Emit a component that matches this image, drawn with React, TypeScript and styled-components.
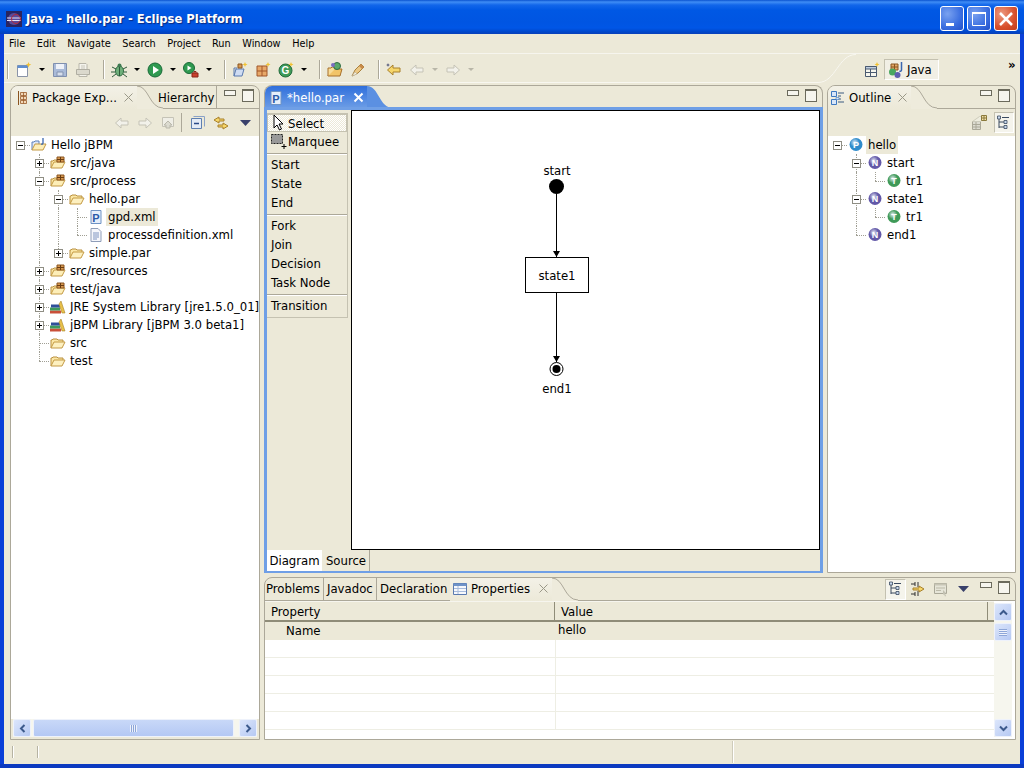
import React from 'react';
import styled, { createGlobalStyle } from 'styled-components';

const GlobalStyle = createGlobalStyle`
  html, body {
    margin: 0;
    padding: 0;
    overflow: hidden;
    background: #ece9d8;
  }
  * {
    box-sizing: border-box;
  }
`;

const UI_FONT = `'DejaVu Sans Condensed', 'DejaVu Sans', 'Liberation Sans', sans-serif`;

/* ---------- icons ---------- */

const Ico = styled.svg.attrs({ viewBox: '0 0 16 16' })`
  width: 16px;
  height: 16px;
  flex-shrink: 0;
  display: block;
`;

const FolderIcon = () => (
  <Ico>
    <path d="M1 13V5h1l1-1h4l1 1h5v2" fill="#fbe7a6" stroke="#b98f3c" />
    <path d="M1 13l3-6h11l-3 6z" fill="#fdf0c0" stroke="#c49a44" />
  </Ico>
);

const PackageFolderIcon = () => (
  <Ico>
    <path d="M1 13V6h2l1-1h3v2" fill="#fbe7a6" stroke="#b98f3c" />
    <path d="M1 13l3-6h11l-3 6z" fill="#fdeeb8" stroke="#c49a44" />
    <path d="M7 2h7v5H7z" fill="#d99a50" stroke="#8a5420" />
    <path d="M10.500 2v5M7 4.500h7" stroke="#6b3d12" />
  </Ico>
);

const ProjectIcon = () => (
  <Ico>
    <path d="M1 13V5h2l1-1h4v3" fill="#dfe8f8" stroke="#5b7fb8" />
    <path d="M1 13l3-6h11l-3 6z" fill="#fdeeb8" stroke="#c49a44" />
    <path d="M12 1v5c0 1-1 1.500-2 1" fill="none" stroke="#3a66b0" strokeWidth="1.300" />
  </Ico>
);

const LibraryIcon = () => (
  <Ico>
    <path d="M0 11.500h11v3H0z" fill="#c9503a" />
    <path d="M0 8.500h10v3H0z" fill="#3d9a5c" />
    <path d="M1 5.500h9v3H1z" fill="#2f4f9a" />
    <path d="M11 2l4 12h-3L9 5z" fill="#e8c04a" stroke="#a8842a" strokeWidth=".6" />
  </Ico>
);

const ParFileIcon = () => (
  <Ico>
    <path d="M3 1.500h10v13H3z" fill="#e6eefa" stroke="#6f93c4" />
    <text x="8" y="12.500" textAnchor="middle" fontSize="11" fontWeight="700" fontFamily="Liberation Sans" fill="#2a5aa8">P</text>
  </Ico>
);

const XmlFileIcon = () => (
  <Ico>
    <path d="M3 1.500h7l3 3v10H3z" fill="#f6f7fb" stroke="#8f9db8" />
    <path d="M5 6h6M5 8h6M5 10h6M5 12h4" stroke="#7f94c0" />
  </Ico>
);

const Badge = ({ letter, color }: { letter: string; color: string }) => (
  <Ico>
    <defs>
      <radialGradient id={`b${letter}`} cx=".4" cy=".35" r=".7">
        <stop offset="0" stopColor="#e6ecf6" />
        <stop offset=".5" stopColor={color} />
        <stop offset="1" stopColor={color} />
      </radialGradient>
    </defs>
    <circle cx="8" cy="7.500" r="6.500" fill={`url(#b${letter})`} />
    <text x="8" y="11" textAnchor="middle" fontSize="9" fontWeight="700" fontFamily="Liberation Sans" fill="#fff">{letter}</text>
  </Ico>
);

const NewIcon = () => (
  <Ico>
    <path d="M1.500 3.500h10v11h-10z" fill="#fff" stroke="#8a94a8" />
    <path d="M1.500 3.500h10v2.500h-10z" fill="#5f8fd0" />
    <path d="M12.500 0l.8 2 2 .6-2 .8-.8 2-.8-2-2-.8 2-.6z" fill="#f2c230" />
  </Ico>
);

const SaveIcon = () => (
  <Ico>
    <path d="M1.500 1.500h13v13h-13z" fill="#a9bad8" stroke="#7f8fae" />
    <path d="M4 2h8v5H4z" fill="#eef1f8" />
    <path d="M5 10h6v4H5z" fill="#d6deec" stroke="#8393b0" />
  </Ico>
);

const PrintIcon = () => (
  <Ico>
    <path d="M4 1.500h7l1 1v5H4z" fill="#f4f3ec" stroke="#b8b6aa" />
    <path d="M1.500 7.500h13v5h-13z" fill="#dbd9cd" stroke="#b0aea2" />
    <path d="M4 12.500h8v2H4z" fill="#f4f3ec" stroke="#b8b6aa" />
    <path d="M6 4h4M6 6h4" stroke="#c8c6ba" />
  </Ico>
);

const BugIcon = () => (
  <Ico>
    <ellipse cx="8.500" cy="9" rx="4" ry="5" fill="#6fb07a" stroke="#2f6a42" />
    <circle cx="8.500" cy="3.500" r="2" fill="#3f7a52" />
    <path d="M1 5l4 2M16 5l-4 2M0 10h4M16 10h-3M1 15l4-3M16 15l-4-3M8.500 5v9" stroke="#2f5a3a" />
  </Ico>
);

const RunIcon = () => (
  <Ico>
    <circle cx="8" cy="8" r="7" fill="#2f9a50" stroke="#1a6a38" />
    <path d="M6 4l6 4-6 4z" fill="#fff" />
  </Ico>
);

const ExternalIcon = () => (
  <Ico>
    <circle cx="6" cy="6" r="5.500" fill="#2f9a50" stroke="#1a6a38" />
    <path d="M4.500 3.500l4 2.500-4 2.500z" fill="#fff" />
    <path d="M9 11h6v4H9z" fill="#c8402e" stroke="#8a2418" />
    <path d="M11 11V9.500h2V11" fill="none" stroke="#8a2418" />
  </Ico>
);

const NewPackageIcon = () => (
  <Ico>
    <path d="M2 14l2-7h8l-2 7z" fill="#cfdcf2" stroke="#5a7ab0" />
    <path d="M2 14V6h3" fill="none" stroke="#5a7ab0" />
    <path d="M6 2h4v4H6z" fill="#d99a50" stroke="#8a5420" />
    <path d="M13 0l.7 1.800 1.800.7-1.800.7-.7 1.800-.7-1.800-1.800-.7 1.800-.7z" fill="#f2c230" />
  </Ico>
);

const NewClassIcon = () => (
  <Ico>
    <path d="M2 4h10v10H2z" fill="#e8a868" stroke="#a0562a" />
    <path d="M7 4v10M2 9h10" stroke="#a0562a" />
    <path d="M13 0l.7 1.800 1.800.7-1.800.7-.7 1.800-.7-1.800-1.800-.7 1.800-.7z" fill="#f2c230" />
  </Ico>
);

const NewGIcon = () => (
  <Ico>
    <circle cx="7.500" cy="8.500" r="6.500" fill="#3f9a58" stroke="#1f6a3a" />
    <text x="7.500" y="12" textAnchor="middle" fontSize="10" fontWeight="700" fontFamily="Liberation Sans" fill="#fff">G</text>
    <path d="M13 0l.7 1.800 1.800.7-1.800.7-.7 1.800-.7-1.800-1.800-.7 1.800-.7z" fill="#f2c230" />
  </Ico>
);

const OpenTypeIcon = () => (
  <Ico>
    <path d="M1 14l2-7h12l-2 7z" fill="#f2c468" stroke="#a8702a" />
    <path d="M1 14V6h3l1-1h5" fill="#f8dc98" stroke="#a8702a" />
    <circle cx="10" cy="4" r="3.500" fill="#5aa86a" stroke="#2f6a42" />
    <circle cx="6" cy="3" r="2" fill="#7a6cc0" />
  </Ico>
);

const MarkerIcon = () => (
  <Ico>
    <path d="M2 14l3-6 6-6 3 3-6 6z" fill="#ecc884" stroke="#a8803e" />
    <path d="M9 4l3 3 2-2-3-3z" fill="#c88a4a" />
    <path d="M2 14l3-4 2 2z" fill="#f6f2e2" stroke="#b0a890" strokeWidth=".5" />
  </Ico>
);

const ArrowIcon = ({ dir = 'left', ghost = false, star = false }: { dir?: 'left' | 'right'; ghost?: boolean; star?: boolean }) => (
  <Ico>
    <g transform={dir === 'right' ? 'matrix(-1 0 0 1 16 0)' : undefined}>
      <path
        d="M1.500 8L7 3v3h7v4H7v3z"
        fill={ghost ? '#f2f1ea' : '#f6d66a'}
        stroke={ghost ? '#c5c3b6' : '#a8802a'}
      />
    </g>
    {star && <path d="M2 1l.5 1.500L4 3l-1.500.5L2 5l-.5-1.500L0 3l1.500-.5z" fill="#39406a" />}
  </Ico>
);

const DropDownIcon = ({ color = '#000', large = false }: { color?: string; large?: boolean }) => (
  <svg width={large ? 11 : 6} height={large ? 6 : 3} viewBox="0 0 7 4" preserveAspectRatio="none">
    <path d="M0 0h7L3.500 4z" fill={color} />
  </svg>
);

const SyncIcon = () => (
  <Ico>
    <path d="M1 5l5-3v2h5v2H6v2z" fill="#f6d66a" stroke="#a8802a" />
    <path d="M15 11l-5-3v2H5v2h5v2z" fill="#f6d66a" stroke="#a8802a" />
  </Ico>
);

const CollapseIcon = () => (
  <Ico>
    <path d="M1.500 3.500h10v10h-10z" fill="#e4ebf6" stroke="#5f7fb0" />
    <path d="M4 8.500h5" stroke="#2a4a88" strokeWidth="1.300" />
    <path d="M3.500 1.500h11v10" fill="none" stroke="#8aa2c8" />
  </Ico>
);

const HomeGhostIcon = () => (
  <Ico>
    <path d="M2.500 2.500h11v9h-11z" fill="#efeee6" stroke="#c5c3b6" />
    <path d="M8 6l4 4-2 0v3H6v-3H4z" fill="#dcdbd0" stroke="#bab8ab" />
  </Ico>
);

const PackageTabIcon = () => (
  <Ico>
    <path d="M5.500 1v14" stroke="#8a5420" />
    <path d="M7.500 2.500h6v3h-6zM7.500 6.500h6v3h-6zM7.500 10.500h6v3h-6z" fill="#f2d8b8" stroke="#9a5c28" strokeWidth=".8" />
    <path d="M10.500 2.500v11" stroke="#9a5c28" strokeWidth=".8" />
  </Ico>
);

const OutlineIcon = () => (
  <Ico>
    <path d="M1.500 1.500h5v5h-5zM1.500 9.500h5v5h-5z" fill="#d8e6f8" stroke="#3d78c0" />
    <path d="M8 3h6M8 6h3M8 9h3M8 12h6" stroke="#3a5a80" />
    <path d="M6 7.500h3v2H6z" fill="#d8e6f8" stroke="#3d78c0" strokeWidth=".6" />
  </Ico>
);

const PropsIcon = () => (
  <Ico>
    <path d="M1.500 2.500h13v11h-13z" fill="#f6f8fc" stroke="#5a7ab0" />
    <path d="M1.500 2.500h13v2.500h-13z" fill="#6f93c8" />
    <path d="M2 7.500h12M2 10.500h12M6 5v8" stroke="#a8bcdc" />
  </Ico>
);

const HierarchyIcon = () => (
  <Ico>
    <path d="M3 2v11M3 7h5M3 12h5" stroke="#3a4a60" fill="none" />
    <path d="M1.500 1h3v3h-3zM8 5.500h3v3H8zM8 10.500h3v3H8z" fill="#c8d8ec" stroke="#3a4a60" strokeWidth=".8" />
    <path d="M6 2.500h7" stroke="#3a4a60" />
  </Ico>
);

const FlatLayoutIcon = () => (
  <Ico>
    <path d="M1.500 6.500h8v8h-8z" fill="#dcdbd0" stroke="#aaa898" />
    <path d="M1.500 9.500h8M1.500 12h8M5 6.500v8" stroke="#aaa898" />
    <path d="M1.500 6.500l7-5 6 0-5 5" fill="#eeeddf" stroke="#cfcdbc" />
    <path d="M10.500 .5h5v5h-5z" fill="#f2dfa8" stroke="#8a7a3c" />
    <path d="M13 .5v5M10.500 3h5" stroke="#8a7a3c" />
  </Ico>
);

const PinNextIcon = () => (
  <Ico>
    <path d="M5 1v4M1 3h4M5 11v4M1 13h4M8 1v5M8 10v5" stroke="#333" />
    <path d="M3 7h6V5l5 3-5 3V9H3z" fill="#f6d66a" stroke="#a8802a" />
  </Ico>
);

const FilterGhostIcon = () => (
  <Ico>
    <path d="M1.500 2.500h12v10h-12z" fill="#e6e5d8" stroke="#aaa898" />
    <path d="M1.500 2.500h12v2h-12z" fill="#c8c6b6" />
    <path d="M3 7h9M3 9.500h5" stroke="#bcbaa9" />
    <path d="M10 9l3 3-1 .5 1 2.500-1 .5-1-2.500-1 1z" fill="#c2c0b1" />
  </Ico>
);

const PerspectiveOpenIcon = () => (
  <Ico>
    <path d="M1.500 4.500h11v10h-11z" fill="#f6f6ee" stroke="#4a5a70" />
    <path d="M1.500 4.500h11v2.500h-11z" fill="#bfcde0" stroke="#4a5a70" />
    <path d="M6.500 7v7.500M1.500 10.500h11" stroke="#4a5a70" />
    <path d="M13 0l.7 1.800 1.800.7-1.800.7-.7 1.800-.7-1.800-1.800-.7 1.800-.7z" fill="#f2c230" />
  </Ico>
);

const JavaPerspectiveIcon = () => (
  <Ico>
    <path d="M3 2h7v6H3z" fill="#e2a868" stroke="#8a5420" />
    <path d="M6.500 2v6M3 5h7" stroke="#8a5420" />
    <circle cx="4.500" cy="10" r="3.500" fill="#4aa860" />
    <circle cx="9.500" cy="13" r="3" fill="#5f5fb0" />
    <path d="M13.500 0v8c0 1-1 1.500-2 1" fill="none" stroke="#3a66b0" strokeWidth="1.500" />
  </Ico>
);

const Chevron = ({ dir }: { dir: 'up' | 'down' | 'left' | 'right' }) => {
  const rotation = { up: 0, right: 90, down: 180, left: 270 }[dir];
  return (
    <svg width="9" height="9" viewBox="0 0 9 9">
      <path
        d="M1 6.500L4.500 3 8 6.500"
        fill="none"
        stroke="#3c5a8c"
        strokeWidth="2"
        transform={`rotate(${rotation} 4.500 4.500)`}
      />
    </svg>
  );
};

const CursorIcon = () => (
  <Ico>
    <path d="M3 0v13l3-3 2.500 5 2-1-2.500-5h4z" fill="#fff" stroke="#000" />
  </Ico>
);

const MarqueeIcon = () => (
  <Ico>
    <path d="M.5 1.500h11v9H.5z" fill="#999" stroke="#222" strokeDasharray="2 1" />
    <path d="M13 11v5M10.500 13.500h5" stroke="#000" />
  </Ico>
);

/* ---------- window frame ---------- */

const Win = styled.div`
  width: 1024px;
  height: 768px;
  display: flex;
  flex-direction: column;
  overflow: hidden;
  background: #ece9d8;
  font-family: ${UI_FONT};
  font-size: 13px;
  color: #000;
  border-bottom: 4px solid #0b39c0;
`;

const TitleBar = styled.div`
  height: 34px;
  flex-shrink: 0;
  display: flex;
  align-items: center;
  padding: 3px 6px 0 6px;
  color: #fff;
  background: linear-gradient(
    180deg,
    #0a53d0 0,
    #3f8df5 2px,
    #1266ea 5px,
    #0058e4 10px,
    #0055e2 22px,
    #0056e6 28px,
    #0046c8 32px,
    #0a3fb8 34px
  );
`;

const AppLogo = styled.svg.attrs({ viewBox: '0 0 16 16' })`
  width: 16px;
  height: 16px;
  margin-right: 4px;
`;

const TitleText = styled.span`
  flex: 1;
  font-family: 'DejaVu Sans Condensed', 'Liberation Sans', sans-serif;
  font-size: 12.800px;
  font-weight: 700;
  text-shadow: 1px 1px 1px #0a2a80;
`;

const WinButtons = styled.div`
  display: flex;
  gap: 3px;
`;

const WinButton = styled.div<{ $close?: boolean }>`
  width: 24px;
  height: 25px;
  border: 1px solid #fff;
  border-radius: 3px;
  display: flex;
  align-items: center;
  justify-content: center;
  background: ${({ $close }) =>
    $close
      ? 'radial-gradient(circle at 30% 30%, #ec9a80, #d8502c 60%, #c03c1c)'
      : 'radial-gradient(circle at 30% 30%, #7aa2f0, #3a6ee0 60%, #2350c8)'};
`;

const Body = styled.div`
  flex: 1;
  min-height: 0;
  display: flex;
  flex-direction: column;
  border-left: 4px solid #0a3fd8;
  border-right: 4px solid #0a3fd8;
`;

const MenuBar = styled.div`
  height: 20px;
  flex-shrink: 0;
  display: flex;
  align-items: center;
  gap: 11.600px;
  padding: 1px 0 0 5px;
  border-bottom: 1px solid #f6f5ee;
`;

const MenuItem = styled.span`
  font-size: 10.800px;
  line-height: 18px;
`;

const ToolBar = styled.div`
  position: relative;
  height: 31px;
  flex-shrink: 0;
  display: flex;
  align-items: center;
  padding-left: 3px;
`;

const ToolCurve = styled.svg`
  position: absolute;
  left: 0;
  top: 0;
  pointer-events: none;
`;

const ToolSep = styled.div<{ $first?: boolean }>`
  width: ${({ $first }) => ($first ? '5.500px' : '13px')};
  padding-left: ${({ $first }) => ($first ? '0' : '8px')};
  height: 19px;
  flex-shrink: 0;

  &::before {
    content: '';
    display: block;
    width: 1px;
    height: 100%;
    background: #aca899;
    box-shadow: 1px 0 0 #fff;
  }
`;

const ToolSlot = styled.div`
  width: 23px;
  height: 22px;
  flex-shrink: 0;
  display: flex;
  align-items: center;
  justify-content: center;
`;

const ArrowSlot = styled(ToolSlot)`
  width: 13px;
`;

const Perspectives = styled.div`
  margin-left: auto;
  display: flex;
  align-items: center;
  position: relative;
`;

const PerspectiveBtn = styled.div`
  width: 55px;
  height: 21px;
  margin-left: 4px;
  display: flex;
  align-items: center;
  gap: 3px;
  padding-left: 3px;
  font-size: 13px;
  background: #f1efe5;
  border: 1px solid #c4c1b0;
  border-right-color: #fff;
  border-bottom-color: #fff;
`;

const More = styled.span`
  width: 12px;
  margin-left: 69px;
  margin-top: -9px;
  font-size: 13px;
  font-weight: 700;
  line-height: 12px;
`;

/* ---------- panels ---------- */

const Main = styled.div`
  flex: 1;
  min-height: 0;
  display: flex;
  gap: 4px;
  padding-left: 6px;
`;

const RightColumn = styled.div`
  width: 752px;
  display: flex;
  flex-direction: column;
  gap: 4px;
`;

const TopRow = styled.div`
  flex: 1;
  min-height: 0;
  display: flex;
  gap: 4px;
`;

const Panel = styled.div<{ $w?: number; $h?: number }>`
  width: ${({ $w }) => ($w ? `${$w}px` : 'auto')};
  height: ${({ $h }) => ($h ? `${$h}px` : 'auto')};
  display: flex;
  flex-direction: column;
  flex-shrink: 0;
  overflow: hidden;
  border: 1px solid #aca899;
  border-radius: 8px 8px 0 0;
`;

const EditorPanel = styled.div`
  width: 559px;
  display: flex;
  flex-direction: column;
  flex-shrink: 0;
  overflow: hidden;
`;

const TabStrip = styled.div<{ $focus?: boolean }>`
  height: 23px;
  flex-shrink: 0;
  display: flex;
  align-items: stretch;
  position: relative;
  ${({ $focus }) =>
    $focus
      ? `
    border: 1px solid #aca899;
    border-bottom: 0;
    border-radius: 8px 8px 0 0;
    overflow: hidden;
  `
      : `
    border-bottom: 1px solid #aca899;
  `}
`;

const ActiveTab = styled.div<{ $focus?: boolean; $w: number; $lift?: boolean }>`
  width: ${({ $w }) => $w}px;
  flex-shrink: 0;
  display: flex;
  align-items: center;
  gap: 1px;
  padding-left: ${({ $focus }) => ($focus ? '2px' : '1px')};
  padding-bottom: ${({ $lift }) => ($lift ? '2px' : '0')};
  margin-bottom: -1px;
  font-size: 13px;
  white-space: nowrap;
  color: ${({ $focus }) => ($focus ? '#fff' : '#000')};
  background: ${({ $focus }) =>
    $focus ? 'linear-gradient(180deg, #2f6fdc, #6f9fe6)' : 'linear-gradient(180deg, #f3f1e7, #ece9d8)'};
`;

const TabGap = styled.span<{ $w: number }>`
  width: ${({ $w }) => $w}px;
  flex-shrink: 0;
`;

const TabClose = styled.span`
  margin-left: auto;
  margin-right: 3px;
  display: flex;
  align-items: center;
`;

const TabCurveSvg = styled.svg.attrs({ width: 26, height: 23, viewBox: '0 0 26 23' })`
  flex-shrink: 0;
  margin-bottom: -1px;
`;

const PlainTab = styled.div<{ $w?: number; $pad?: number; $lift?: boolean }>`
  width: ${({ $w }) => ($w ? `${$w}px` : 'auto')};
  flex-shrink: 0;
  padding-left: ${({ $pad }) => $pad ?? 0}px;
  padding-bottom: ${({ $lift }) => ($lift ? '2px' : '0')};
  display: flex;
  align-items: center;
  font-size: 13px;
  white-space: nowrap;
`;

const HierarchyTab = styled(PlainTab)`
  margin-left: -5px;
  position: relative;
`;

const TabDivider = styled.span`
  width: 1px;
  height: 22px;
  flex-shrink: 0;
  align-self: flex-start;
  background: #aca899;
`;

const StripEnd = styled.div`
  margin-left: auto;
  display: flex;
  align-items: center;
  padding-right: 4px;
  gap: 4px;
  margin-top: -3px;
`;

const StripTools = styled.div`
  display: flex;
  align-items: center;
  margin-top: 3px;
`;

const MinBtn = styled.span`
  width: 14px;
  height: 14px;
  display: flex;
  align-items: center;
  justify-content: center;

  &::before {
    content: '';
    width: 10px;
    height: 4px;
    border: 1px solid #6b6a5c;
    background: #f6f5ee;
    margin-top: -5px;
  }
`;

const MaxBtn = styled.span`
  width: 14px;
  height: 14px;
  display: flex;
  align-items: center;
  justify-content: center;

  &::before {
    content: '';
    width: 10px;
    height: 10px;
    border: 1px solid #6b6a5c;
    border-top-width: 2px;
    background: #f6f5ee;
  }
`;

const CloseGlyph = ({ color = '#9a9888', strokeWidth = 1 }: { color?: string; strokeWidth?: number }) => (
  <svg width="11" height="11" viewBox="0 0 11 11">
    <path d="M1.500 1.500l8 8M9.500 1.500l-8 8" stroke={color} strokeWidth={strokeWidth} fill="none" />
  </svg>
);

const TabCurve = () => (
  <TabCurveSvg>
    <path d="M0 0C12 0 12 22 26 22V23H0Z" fill="#eeebdc" />
    <path d="M0 0C12 0 12 22 26 22" fill="none" stroke="#aca899" />
  </TabCurveSvg>
);

const ViewBar = styled.div`
  height: 27px;
  flex-shrink: 0;
  display: flex;
  align-items: center;
  justify-content: flex-end;
  padding-right: 1px;
`;

const ViewSlot = styled.div<{ $on?: boolean; $w?: number }>`
  width: ${({ $w }) => $w ?? 23}px;
  height: 21px;
  flex-shrink: 0;
  display: flex;
  align-items: center;
  justify-content: center;
  ${({ $on }) =>
    $on &&
    `
    background: #f5f4ec;
    border: 1px solid #c4c1b0;
    border-right-color: #fff;
    border-bottom-color: #fff;
  `}
`;

const ViewSep = styled.span`
  width: 1px;
  height: 19px;
  background: #aca899;
  margin: 0 4px 0 2px;
`;

/* ---------- tree ---------- */

type Line = 'none' | 'through' | 'tee' | 'end' | 'root';

const TreeBox = styled.div`
  flex: 1;
  min-height: 0;
  overflow: hidden;
  background: #fff;
`;

const TreeRowBox = styled.div`
  height: 18px;
  display: flex;
  align-items: center;
  white-space: nowrap;
  font-size: 13px;
`;

const TreeCell = styled.div<{ $line: Line }>`
  position: relative;
  width: 19px;
  height: 18px;
  flex-shrink: 0;
  display: flex;
  align-items: center;
  justify-content: center;

  &::before {
    content: '';
    position: absolute;
    left: 9px;
    top: 0;
    height: ${({ $line }) => ($line === 'end' ? '9px' : '18px')};
    border-left: ${({ $line }) => ($line === 'none' || $line === 'root' ? '0' : '1px dotted #a09f94')};
  }

  &::after {
    content: '';
    position: absolute;
    left: 9px;
    top: 9px;
    width: 10px;
    border-top: ${({ $line }) => ($line === 'none' || $line === 'through' ? '0' : '1px dotted #a09f94')};
  }
`;

const Toggle = styled.span`
  position: relative;
  z-index: 1;
  width: 9px;
  height: 9px;
  margin-top: 1px;
  background: #fff;
  border: 1px solid #8f8e84;
  display: flex;
  align-items: center;
  justify-content: center;
`;

const ToggleMark = styled.svg.attrs({ width: 7, height: 7, viewBox: '0 0 7 7' })`
  display: block;
`;

const TreeIconCell = styled.div`
  position: relative;
  width: 19px;
  height: 18px;
  flex-shrink: 0;
  display: flex;
  align-items: center;
  padding-left: 1px;
`;

const TreeLabel = styled.span<{ $selected?: boolean }>`
  padding: 0 2px;
  line-height: 18px;
  background: ${({ $selected }) => ($selected ? '#ece9d8' : 'transparent')};
`;

interface TreeRowData {
  guides: Line[];
  line: Line;
  toggle?: '+' | '-';
  icon: React.ReactNode;
  label: string;
  selected?: boolean;
}

function TreeRow({ guides, line, toggle, icon, label, selected }: TreeRowData) {
  return (
    <TreeRowBox>
      {guides.map((guide, i) => (
        <TreeCell key={i} $line={guide} />
      ))}
      <TreeCell $line={line}>
        {toggle && (
          <Toggle>
            <ToggleMark>
              <path d={toggle === '+' ? 'M1 3.500h5M3.500 1v5' : 'M1 3.500h5'} stroke="#000" />
            </ToggleMark>
          </Toggle>
        )}
      </TreeCell>
      <TreeIconCell>{icon}</TreeIconCell>
      <TreeLabel $selected={selected}>{label}</TreeLabel>
    </TreeRowBox>
  );
}

const packageRows: TreeRowData[] = [
  { guides: [], line: 'root', toggle: '-', icon: <ProjectIcon />, label: 'Hello jBPM' },
  { guides: ['none'], line: 'tee', toggle: '+', icon: <PackageFolderIcon />, label: 'src/java' },
  { guides: ['none'], line: 'tee', toggle: '-', icon: <PackageFolderIcon />, label: 'src/process' },
  { guides: ['none', 'through'], line: 'tee', toggle: '-', icon: <FolderIcon />, label: 'hello.par' },
  { guides: ['none', 'through', 'through'], line: 'tee', icon: <ParFileIcon />, label: 'gpd.xml', selected: true },
  { guides: ['none', 'through', 'through'], line: 'end', icon: <XmlFileIcon />, label: 'processdefinition.xml' },
  { guides: ['none', 'through'], line: 'end', toggle: '+', icon: <FolderIcon />, label: 'simple.par' },
  { guides: ['none'], line: 'tee', toggle: '+', icon: <PackageFolderIcon />, label: 'src/resources' },
  { guides: ['none'], line: 'tee', toggle: '+', icon: <PackageFolderIcon />, label: 'test/java' },
  { guides: ['none'], line: 'tee', toggle: '+', icon: <LibraryIcon />, label: 'JRE System Library [jre1.5.0_01]' },
  { guides: ['none'], line: 'tee', toggle: '+', icon: <LibraryIcon />, label: 'jBPM Library [jBPM 3.0 beta1]' },
  { guides: ['none'], line: 'tee', icon: <FolderIcon />, label: 'src' },
  { guides: ['none'], line: 'end', icon: <FolderIcon />, label: 'test' }
];

const P_BADGE = <Badge letter="P" color="#2f8ccc" />;
const N_BADGE = <Badge letter="N" color="#6258a8" />;
const T_BADGE = <Badge letter="T" color="#3f9a58" />;

const outlineRows: TreeRowData[] = [
  { guides: [], line: 'root', toggle: '-', icon: P_BADGE, label: 'hello', selected: true },
  { guides: ['none'], line: 'tee', toggle: '-', icon: N_BADGE, label: 'start' },
  { guides: ['none', 'through'], line: 'end', icon: T_BADGE, label: 'tr1' },
  { guides: ['none'], line: 'tee', toggle: '-', icon: N_BADGE, label: 'state1' },
  { guides: ['none', 'through'], line: 'end', icon: T_BADGE, label: 'tr1' },
  { guides: ['none'], line: 'end', icon: N_BADGE, label: 'end1' }
];

/* ---------- scrollbars ---------- */

const HScroll = styled.div`
  height: 18px;
  flex-shrink: 0;
  display: flex;
  align-items: center;
  margin: 0 2px 2px 2px;
  background: #f6f6ee;
`;

const ScrollBtn = styled.div`
  width: 18px;
  height: 18px;
  flex-shrink: 0;
  display: flex;
  align-items: center;
  justify-content: center;
  border: 1px solid #eef2fb;
  border-radius: 2px;
  background: linear-gradient(135deg, #dce6fb, #b6c9f3);
`;

const HThumb = styled.div`
  width: 202px;
  height: 18px;
  margin: 0 5px 0 2px;
  border: 1px solid #eef2fb;
  border-radius: 2px;
  background: linear-gradient(180deg, #c8d8f8, #b4c8f4);
  display: flex;
  align-items: center;
  justify-content: center;
`;

const Grip = styled.span`
  width: 7px;
  height: 7px;
  background: repeating-linear-gradient(90deg, #eef2fb 0 1px, #8da6d8 1px 2px);
`;

const VScroll = styled.div`
  width: 18px;
  flex-shrink: 0;
  display: flex;
  flex-direction: column;
  align-items: center;
  margin: 2px 3px 2px 0;
  background: #f6f6ee;
`;

const VThumb = styled(ScrollBtn)`
  margin-top: 2px;
  margin-bottom: auto;
`;

const VGrip = styled.span`
  width: 8px;
  height: 7px;
  background: repeating-linear-gradient(180deg, #8da6d8 0 1px, #eef2fb 1px 2px);
`;

/* ---------- editor ---------- */

const EditorBody = styled.div`
  flex: 1;
  min-height: 0;
  display: flex;
  flex-direction: column;
  border: 3px solid #6f9fe6;
  border-bottom-width: 2px;
  margin-top: -1px;
  position: relative;
`;

const EditorContent = styled.div`
  flex: 1;
  min-height: 0;
  display: flex;
`;

const Palette = styled.div`
  width: 84px;
  flex-shrink: 0;
  padding-top: 3px;
`;

const PaletteBox = styled.div`
  width: 81px;
  padding-bottom: 2px;
  border: 1px solid #c5c2b1;
  border-left: 0;
  background: #ece9d8;
`;

const PaletteItem = styled.div<{ $on?: boolean; $h?: number }>`
  height: ${({ $h }) => $h ?? 19}px;
  display: flex;
  align-items: center;
  gap: 1px;
  padding-left: 4px;
  font-size: 13px;
  ${({ $on }) =>
    $on &&
    `
    background: repeating-conic-gradient(#ffffff 0 25%, #ece9d8 0 50%) 0 0 / 2px 2px;
    outline: 1px solid #c5c2b1;
    outline-offset: -1px;
  `}
`;

const PaletteSep = styled.div<{ $top?: number }>`
  height: 2px;
  margin-top: ${({ $top }) => $top ?? 2}px;
  border-top: 1px solid #aca899;
  box-shadow: inset 0 1px 0 #fff;
`;

const Canvas = styled.div`
  position: relative;
  flex: 1;
  background: #fff;
  border: 1px solid #000;
`;

const Connections = styled.svg`
  position: absolute;
  left: 0;
  top: 0;
  width: 100%;
  height: 100%;
`;

const NodeLabel = styled.span<{ $x: number; $y: number }>`
  position: absolute;
  left: ${({ $x }) => $x}px;
  top: ${({ $y }) => $y}px;
  transform: translateX(-50%);
  font-size: 13px;
  line-height: 16px;
`;

const StateNode = styled.div`
  position: absolute;
  left: 173px;
  top: 146px;
  width: 64px;
  height: 36px;
  background: #fff;
  border: 1px solid #000;
  display: flex;
  align-items: center;
  justify-content: center;
  font-size: 13px;
`;

const EditorTabs = styled.div`
  height: 21px;
  flex-shrink: 0;
  display: flex;
  align-items: flex-end;
`;

const PageTab = styled.div<{ $on?: boolean }>`
  width: ${({ $on }) => ($on ? '55px' : '47px')};
  height: 21px;
  padding-bottom: 1px;
  display: flex;
  align-items: center;
  justify-content: center;
  margin-right: 1px;
  font-size: 13px;
  background: ${({ $on }) => ($on ? '#fff' : 'transparent')};
  border-right: ${({ $on }) => ($on ? '0' : '1px solid #aca899')};
`;

/* ---------- properties ---------- */

const PropsBody = styled.div`
  flex: 1;
  min-height: 0;
  display: flex;
  background: #fff;
`;

const PropsTable = styled.div`
  flex: 1;
  min-width: 0;
`;

const HeaderRow = styled.div`
  height: 21px;
  display: flex;
  align-items: center;
  background: #ece9d8;
  border-top: 1px solid #f6f5ee;
  border-bottom: 2px solid #8f8c78;
`;

const HeaderCell = styled.div<{ $w: number }>`
  width: ${({ $w }) => $w}px;
  flex-shrink: 0;
  height: 100%;
  padding-left: 6px;
  display: flex;
  align-items: center;
  font-size: 13px;
  border-right: 1px solid #8f8c78;
`;

const TableRow = styled.div<{ $on?: boolean }>`
  height: 18px;
  display: flex;
  background: ${({ $on }) => ($on ? '#ece9d8' : '#fff')};
  border-bottom: 1px solid ${({ $on }) => ($on ? '#ece9d8' : '#eeeee4')};
`;

const NameCell = styled.div`
  width: 290px;
  padding-left: 21px;
  font-size: 13px;
  line-height: 18px;
  flex-shrink: 0;
`;

const ValueCell = styled.div<{ $blank?: boolean }>`
  flex: 1;
  padding-left: 2px;
  font-size: 13px;
  line-height: 16px;
  border-left: 1px solid ${({ $blank }) => ($blank ? '#eeeee4' : 'transparent')};
`;

/* ---------- status bar ---------- */

const StatusBar = styled.div`
  height: 24px;
  flex-shrink: 0;
  display: flex;
  align-items: center;
`;

const StatusMark = styled.span<{ $ml: number }>`
  width: 1px;
  height: 12px;
  margin-left: ${({ $ml }) => $ml}px;
  background: #b6b3a2;
  box-shadow: 1px 0 0 #fff;
`;

const StatusDivider = styled.span`
  width: 1px;
  height: 22px;
  margin-left: 694px;
  background: #cfccba;
  box-shadow: 1px 0 0 #fff;
`;

export default function App() {
  return (
    <>
      <GlobalStyle />
      <Win>
        <TitleBar>
          <AppLogo>
            <rect width="16" height="16" fill="#2a2560" />
            <circle cx="8" cy="8" r="6" fill="#5a4a9a" />
            <path d="M1 7h14M1 9.500h14" stroke="#e8e4f4" strokeWidth="1" />
            <circle cx="10" cy="8" r="4.500" fill="none" stroke="#b02a3a" />
          </AppLogo>
          <TitleText>Java - hello.par - Eclipse Platform</TitleText>
          <WinButtons>
            <WinButton>
              <svg width="16" height="16" viewBox="0 0 16 16">
                <path d="M2 12h8v3H2z" fill="#fff" />
              </svg>
            </WinButton>
            <WinButton>
              <svg width="16" height="16" viewBox="0 0 16 16">
                <path d="M1.500 1.500h13v13h-13z" fill="none" stroke="#fff" />
                <path d="M1 2h14" stroke="#fff" strokeWidth="2" />
              </svg>
            </WinButton>
            <WinButton $close>
              <svg width="16" height="16" viewBox="0 0 16 16">
                <path d="M2 2l12 12M14 2L2 14" stroke="#fff" strokeWidth="2.500" />
              </svg>
            </WinButton>
          </WinButtons>
        </TitleBar>
        <Body>
          <MenuBar>
            {['File', 'Edit', 'Navigate', 'Search', 'Project', 'Run', 'Window', 'Help'].map((item) => (
              <MenuItem key={item}>{item}</MenuItem>
            ))}
          </MenuBar>
          <ToolBar>
            <ToolCurve width="1016" height="31" viewBox="0 0 1016 31">
              <path d="M0 28.500H814C832 28.500 834 .5 852 .5" fill="none" stroke="#f8f7f0" />
            </ToolCurve>
            <ToolSep $first />
            <ToolSlot><NewIcon /></ToolSlot>
            <ArrowSlot><DropDownIcon /></ArrowSlot>
            <ToolSlot><SaveIcon /></ToolSlot>
            <ToolSlot><PrintIcon /></ToolSlot>
            <ToolSep />
            <ToolSlot><BugIcon /></ToolSlot>
            <ArrowSlot><DropDownIcon /></ArrowSlot>
            <ToolSlot><RunIcon /></ToolSlot>
            <ArrowSlot><DropDownIcon /></ArrowSlot>
            <ToolSlot><ExternalIcon /></ToolSlot>
            <ArrowSlot><DropDownIcon /></ArrowSlot>
            <ToolSep />
            <ToolSlot><NewPackageIcon /></ToolSlot>
            <ToolSlot><NewClassIcon /></ToolSlot>
            <ToolSlot><NewGIcon /></ToolSlot>
            <ArrowSlot><DropDownIcon /></ArrowSlot>
            <ToolSep />
            <ToolSlot><OpenTypeIcon /></ToolSlot>
            <ToolSlot><MarkerIcon /></ToolSlot>
            <ToolSep />
            <ToolSlot><ArrowIcon star /></ToolSlot>
            <ToolSlot><ArrowIcon ghost /></ToolSlot>
            <ArrowSlot><DropDownIcon color="#b8b6a8" /></ArrowSlot>
            <ToolSlot><ArrowIcon dir="right" ghost /></ToolSlot>
            <ArrowSlot><DropDownIcon color="#b8b6a8" /></ArrowSlot>
            <Perspectives>
              <PerspectiveOpenIcon />
              <PerspectiveBtn>
                <JavaPerspectiveIcon />
                Java
              </PerspectiveBtn>
              <More>»</More>
            </Perspectives>
          </ToolBar>
          <Main>
            <Panel $w={250}>
              <TabStrip>
                <ActiveTab $w={126}>
                  <TreeIconCell><PackageTabIcon /></TreeIconCell>
                  Package Exp...
                  <TabClose><CloseGlyph /></TabClose>
                </ActiveTab>
                <TabCurve />
                <HierarchyTab>Hierarchy</HierarchyTab>
                <TabGap $w={1} />
                <TabDivider />
                <StripEnd>
                  <MinBtn />
                  <MaxBtn />
                </StripEnd>
              </TabStrip>
              <ViewBar>
                <ViewSlot><ArrowIcon ghost /></ViewSlot>
                <ViewSlot><ArrowIcon dir="right" ghost /></ViewSlot>
                <ViewSlot><HomeGhostIcon /></ViewSlot>
                <ViewSep />
                <ViewSlot><CollapseIcon /></ViewSlot>
                <ViewSlot><SyncIcon /></ViewSlot>
                <ViewSlot $w={26}><DropDownIcon color="#39406a" large /></ViewSlot>
              </ViewBar>
              <TreeBox>
                {packageRows.map((row, i) => (
                  <TreeRow key={i} {...row} />
                ))}
              </TreeBox>
              <HScroll>
                <ScrollBtn><Chevron dir="left" /></ScrollBtn>
                <HThumb><Grip /></HThumb>
                <ScrollBtn><Chevron dir="right" /></ScrollBtn>
              </HScroll>
            </Panel>
            <RightColumn>
              <TopRow>
                <EditorPanel>
                  <TabStrip $focus>
                    <ActiveTab $focus $w={102}>
                      <TreeIconCell><ParFileIcon /></TreeIconCell>
                      *hello.par
                      <TabClose><CloseGlyph color="#fff" strokeWidth={2} /></TabClose>
                    </ActiveTab>
                    <TabCurveSvg>
                      <path d="M0 0C12 0 12 22 26 22V23H0Z" fill="#5b90e2" />
                    </TabCurveSvg>
                    <StripEnd>
                      <MinBtn />
                      <MaxBtn />
                    </StripEnd>
                  </TabStrip>
                  <EditorBody>
                    <EditorContent>
                      <Palette>
                        <PaletteBox>
                          <PaletteItem $on $h={18}><CursorIcon />Select</PaletteItem>
                          <PaletteItem $h={18}><MarqueeIcon />Marquee</PaletteItem>
                          <PaletteSep $top={3} />
                          <PaletteItem>Start</PaletteItem>
                          <PaletteItem>State</PaletteItem>
                          <PaletteItem>End</PaletteItem>
                          <PaletteSep />
                          <PaletteItem>Fork</PaletteItem>
                          <PaletteItem>Join</PaletteItem>
                          <PaletteItem>Decision</PaletteItem>
                          <PaletteItem>Task Node</PaletteItem>
                          <PaletteSep />
                          <PaletteItem>Transition</PaletteItem>
                        </PaletteBox>
                      </Palette>
                      <Canvas>
                        <Connections>
                          <circle cx="204.500" cy="75.500" r="7.500" fill="#000" />
                          <path d="M204.500 83V146M204.500 182V251" stroke="#000" fill="none" />
                          <path d="M201 140h7l-3.500 6zM201 245h7l-3.500 6z" fill="#000" />
                          <circle cx="204.500" cy="258" r="6.500" fill="#fff" stroke="#000" />
                          <circle cx="204.500" cy="258" r="4" fill="#000" />
                        </Connections>
                        <NodeLabel $x={205} $y={52}>start</NodeLabel>
                        <StateNode>state1</StateNode>
                        <NodeLabel $x={205} $y={270}>end1</NodeLabel>
                      </Canvas>
                    </EditorContent>
                    <EditorTabs>
                      <PageTab $on>Diagram</PageTab>
                      <PageTab>Source</PageTab>
                    </EditorTabs>
                  </EditorBody>
                </EditorPanel>
                <Panel $w={189}>
                  <TabStrip>
                    <ActiveTab $w={83}>
                      <TreeIconCell><OutlineIcon /></TreeIconCell>
                      Outline
                      <TabClose><CloseGlyph /></TabClose>
                    </ActiveTab>
                    <TabCurve />
                    <StripEnd>
                      <MinBtn />
                      <MaxBtn />
                    </StripEnd>
                  </TabStrip>
                  <ViewBar>
                    <ViewSlot $w={30}><FlatLayoutIcon /></ViewSlot>
                    <ViewSlot $on $w={20}><HierarchyIcon /></ViewSlot>
                  </ViewBar>
                  <TreeBox>
                    {outlineRows.map((row, i) => (
                      <TreeRow key={i} {...row} />
                    ))}
                  </TreeBox>
                </Panel>
              </TopRow>
              <Panel $h={163}>
                <TabStrip>
                  <PlainTab $lift $w={58} $pad={1}>Problems</PlainTab>
                  <TabDivider />
                  <PlainTab $lift $w={52} $pad={3}>Javadoc</PlainTab>
                  <TabDivider />
                  <PlainTab $lift $w={73} $pad={3}>Declaration</PlainTab>
                  <ActiveTab $lift $w={102}>
                    <TreeIconCell><PropsIcon /></TreeIconCell>
                    Properties
                    <TabClose><CloseGlyph /></TabClose>
                  </ActiveTab>
                  <TabCurve />
                  <StripEnd>
                    <StripTools>
                      <ViewSlot $on $w={21}><HierarchyIcon /></ViewSlot>
                      <ViewSlot><PinNextIcon /></ViewSlot>
                      <ViewSlot><FilterGhostIcon /></ViewSlot>
                      <ViewSlot><DropDownIcon color="#39406a" large /></ViewSlot>
                    </StripTools>
                    <MinBtn />
                    <MaxBtn />
                  </StripEnd>
                </TabStrip>
                <PropsBody>
                  <PropsTable>
                    <HeaderRow>
                      <HeaderCell $w={290}>Property</HeaderCell>
                      <HeaderCell $w={433}>Value</HeaderCell>
                    </HeaderRow>
                    <TableRow $on>
                      <NameCell>Name</NameCell>
                      <ValueCell>hello</ValueCell>
                    </TableRow>
                    {[0, 1, 2, 3, 4].map((n) => (
                      <TableRow key={n}>
                        <NameCell />
                        <ValueCell $blank />
                      </TableRow>
                    ))}
                  </PropsTable>
                  <VScroll>
                    <ScrollBtn><Chevron dir="up" /></ScrollBtn>
                    <VThumb><VGrip /></VThumb>
                    <ScrollBtn><Chevron dir="down" /></ScrollBtn>
                  </VScroll>
                </PropsBody>
              </Panel>
            </RightColumn>
          </Main>
          <StatusBar>
            <StatusMark $ml={8} />
            <StatusMark $ml={24} />
            <StatusDivider />
          </StatusBar>
        </Body>
      </Win>
    </>
  );
}
